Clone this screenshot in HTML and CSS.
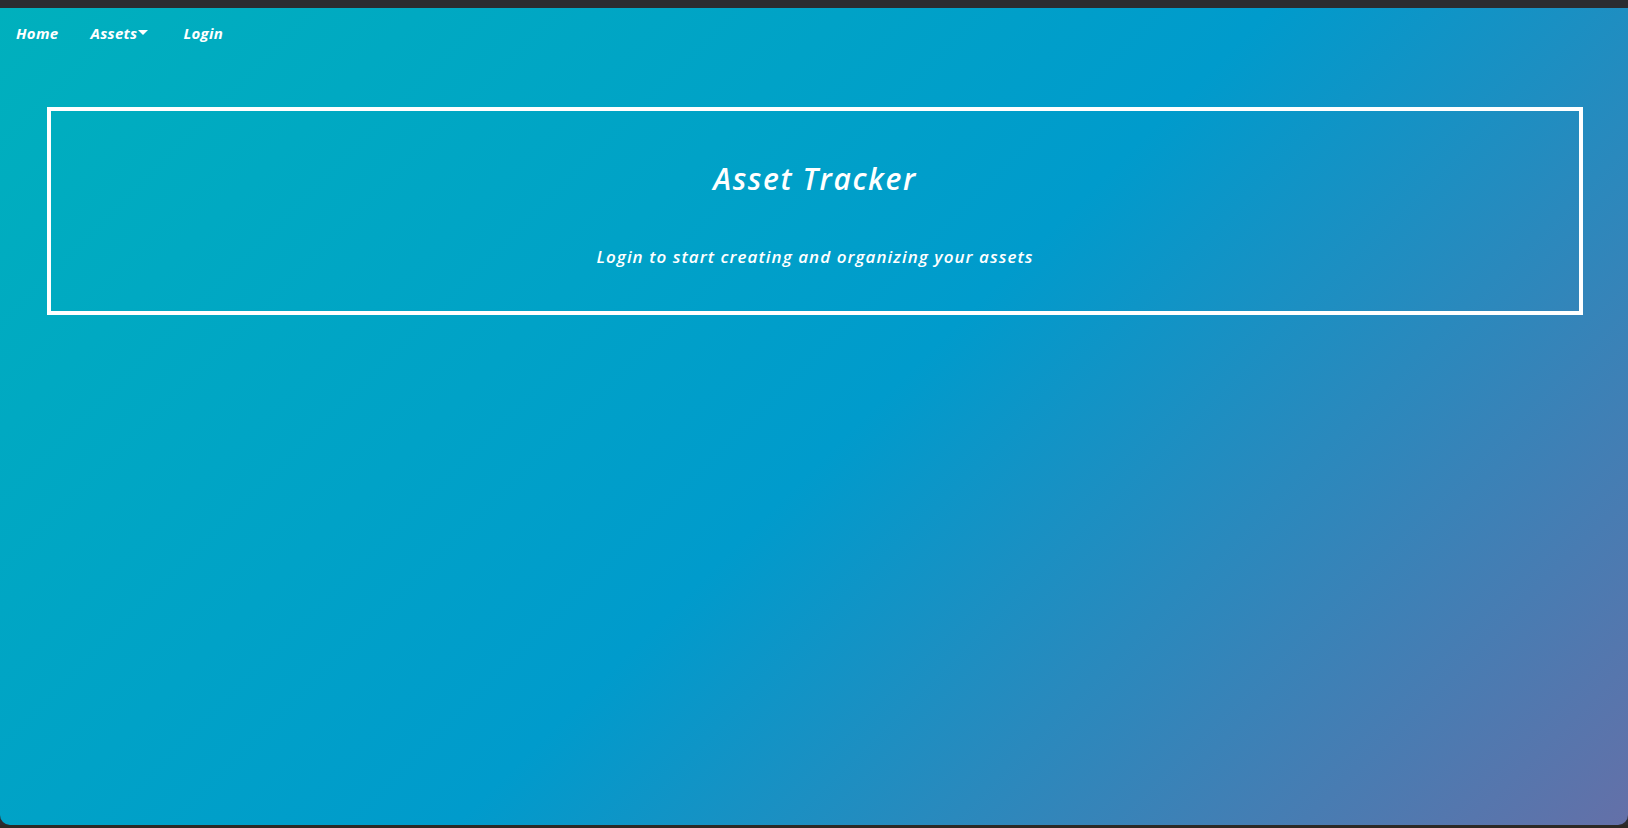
FILE: index.html
```html
<!DOCTYPE html>
<html lang="en">
<head>
<meta charset="utf-8">
<title>Asset Tracker</title>
<link rel="stylesheet" href="styles.css">
</head>
<body>
<div class="topbar"></div>
<div class="app">
  <nav class="nav">
    <a class="nav-link" href="#">Home</a>
    <a class="nav-link" href="#">Assets<span class="caret"></span></a>
    <a class="nav-link" href="#">Login</a>
  </nav>
  <main class="content">
    <section class="hero">
      <h1 class="hero-title">Asset Tracker</h1>
      <p class="hero-sub">Login to start creating and organizing your assets</p>
    </section>
  </main>
</div>
<div class="bottombar"></div>
</body>
</html>
```
FILE: styles.css
```css
html, body {
  margin: 0;
  padding: 0;
  height: 100%;
}
body {
  background: #2b2c30;
  font-family: "Open Sans", "Liberation Sans", sans-serif;
  overflow: hidden;
}
.topbar {
  height: 8px;
  background: #2b2c30;
}
.app {
  height: 817px;
  border-radius: 0 0 10px 10px;
  background: linear-gradient(135deg, #00b0bd 0%, #009bcc 52%, #6470a8 100%);
  color: #fff;
}
.bottombar {
  height: 3px;
  background: #2c2925;
}
.nav {
  display: flex;
  gap: 32px;
  padding: 7px 16px 0 16px;
  height: 35px;
  align-items: center;
}
.nav-link {
  color: #fff;
  text-decoration: none;
  font-style: italic;
  font-weight: 700;
  font-size: 15px;
  letter-spacing: 0.3px;
  display: flex;
  align-items: center;
}
.caret {
  display: inline-block;
  width: 0;
  height: 0;
  border-left: 5px solid transparent;
  border-right: 5px solid transparent;
  border-top: 5px solid #fff;
  margin-left: 1px;
  margin-right: 3px;
}
.content {
  padding: 57px 45px 0 47px;
}
.hero {
  border: 4px solid #fff;
  height: 200px;
  display: flex;
  flex-direction: column;
  align-items: center;
  text-align: center;
}
.hero-title {
  margin: 50px 0 0 0;
  font-size: 30px;
  font-style: italic;
  font-weight: 600;
  line-height: 36px;
  letter-spacing: 1.6px;
}
.hero-sub {
  margin: 49px 0 0 0;
  font-size: 17px;
  font-style: italic;
  font-weight: 600;
  line-height: 22px;
  letter-spacing: 1.05px;
}
```
